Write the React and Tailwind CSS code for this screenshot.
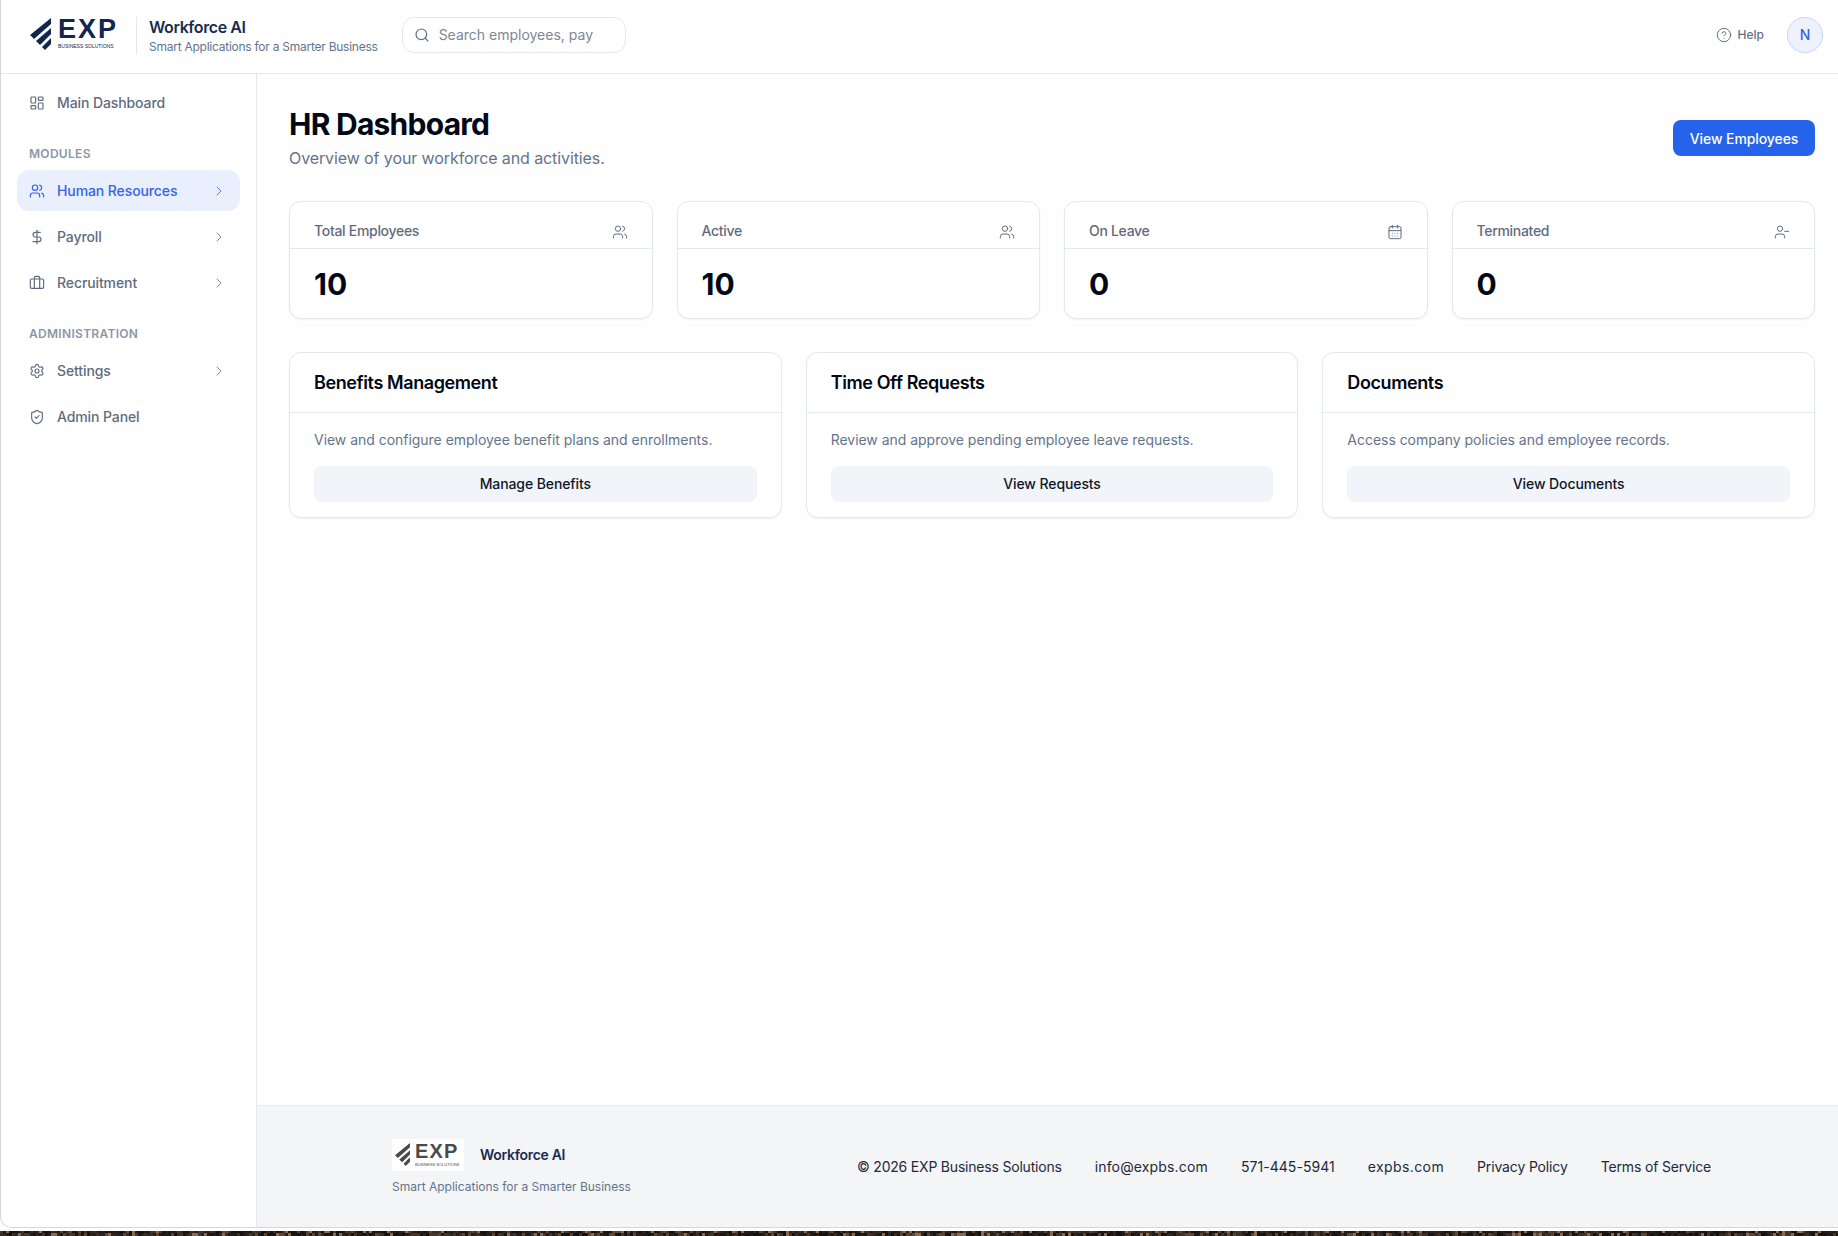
import React from "react";
import {
  LayoutDashboard,
  Users,
  DollarSign,
  Briefcase,
  Settings,
  ShieldCheck,
  ChevronRight,
  Search,
  CircleHelp,
  CalendarDays,
  UserMinus,
} from "lucide-react";

const stats = [
  { label: "Total Employees", value: "10", icon: Users },
  { label: "Active", value: "10", icon: Users },
  { label: "On Leave", value: "0", icon: CalendarDays },
  { label: "Terminated", value: "0", icon: UserMinus },
];

const panels = [
  { title: "Benefits Management", text: "View and configure employee benefit plans and enrollments.", action: "Manage Benefits" },
  { title: "Time Off Requests", text: "Review and approve pending employee leave requests.", action: "View Requests" },
  { title: "Documents", text: "Access company policies and employee records.", action: "View Documents" },
];

const footerLinks = [
  { text: "© 2026 EXP Business Solutions", className: "tracking-[-0.2px]" },
  { text: "info@expbs.com", className: "tracking-[0.15px]" },
  { text: "571-445-5941", className: "tracking-[0.05px]" },
  { text: "expbs.com", className: "tracking-[0.4px]" },
  { text: "Privacy Policy", className: "tracking-[-0.15px]" },
  { text: "Terms of Service", className: "tracking-[-0.15px]" },
];

// desktop wallpaper peeking out under the window
const wallpaper = ["#1f1b18", "#2c2520", "#14110f", "#3a2e25", "#1a1613", "#5b4636", "#241d19", "#8a6a50", "#171310", "#463629"];
const speckle = (n) => Math.floor(Math.abs(Math.sin(n * 12.9898) * 43758.5453)) % wallpaper.length;

// three slanted bars of the EXP mark
const LogoMark = ({ className }) => (
  <svg viewBox="0 0 21 32" className={className} fill="currentColor">
    <polygon points="21,0 21,6 4,21 0,17" />
    <polygon points="21,10 21,16 10,27 6,23" />
    <polygon points="21,20 21,26 15,32 12,29" />
  </svg>
);

const NavItem = ({ icon: Icon, label, active, chevron }) => (
  <div
    className={`flex h-[41px] items-center justify-between rounded-xl px-3 ${
      active ? "bg-[#e9effd] text-[#3563e9]" : "text-[#5f6b80]"
    }`}
  >
    <div className="flex items-center gap-3">
      <Icon size={16} strokeWidth={1.75} />
      <span className="text-sm font-medium tracking-[-0.1px]">{label}</span>
    </div>
    {chevron && <ChevronRight size={16} strokeWidth={1.5} className="mr-[1px] opacity-80" />}
  </div>
);

const Header = () => (
  <header className="flex h-[74px] shrink-0 items-center justify-between border-b border-[#e5e8ec] bg-white pb-[3px] pl-[29px] pr-[15px]">
    <div className="flex items-center">
      <div className="mb-[3px] flex w-[88px] items-center gap-[7px] text-[#12264f]">
        <LogoMark className="h-8 w-[21px] shrink-0" />
        <div className="flex flex-col">
          <span className="font-['Liberation_Sans',sans-serif] text-[27px] font-bold leading-[22px] tracking-[2px]">EXP</span>
          <span className="mt-[3px] whitespace-nowrap font-['Liberation_Sans',sans-serif] text-[5px] leading-[7px]">BUSINESS SOLUTIONS</span>
        </div>
      </div>
      <div className="ml-[18px] h-[37px] w-px bg-[#e5e8ec]" />
      <div className="ml-[12px] flex flex-col pt-[1px]">
        <span className="text-base font-semibold leading-[22px] tracking-[-0.4px] text-[#1a2b50]">Workforce AI</span>
        <span className="text-xs leading-[17px] tracking-[-0.25px] text-[#64748b]">Smart Applications for a Smarter Business</span>
      </div>
      <div className="mb-[1px] ml-6 flex h-9 w-[224px] items-center gap-[9px] rounded-xl border border-[#e5e8ec] bg-white px-[11px]">
        <Search size={16} strokeWidth={1.75} className="text-[#5f6b80]" />
        <span className="text-sm text-[#7c8798]">Search employees, pay</span>
      </div>
    </div>
    <div className="flex items-center gap-[23px]">
      <div className="flex items-center gap-[6px] text-[#646f82]">
        <CircleHelp size={16} strokeWidth={1.5} />
        <span className="text-xs font-medium">Help</span>
      </div>
      <div className="flex h-9 w-9 items-center justify-center rounded-full border border-[#c7d2fe] bg-[#eef2ff] text-sm font-medium text-[#3563e9]">
        N
      </div>
    </div>
  </header>
);

const Sidebar = () => (
  <aside className="flex w-[256px] shrink-0 flex-col border-r border-[#e5e8ec] bg-white pl-[16px] pr-[16px] pt-[8px]">
    <NavItem icon={LayoutDashboard} label="Main Dashboard" />
    <div className="mb-[8px] mt-[23px] px-3 text-xs font-semibold tracking-[0.3px] text-[#8c96a8]">MODULES</div>
    <div className="flex flex-col gap-[5px]">
      <NavItem icon={Users} label="Human Resources" active chevron />
      <NavItem icon={DollarSign} label="Payroll" chevron />
      <NavItem icon={Briefcase} label="Recruitment" chevron />
    </div>
    <div className="mb-[8px] mt-[23px] px-3 text-xs font-semibold tracking-[0.3px] text-[#8c96a8]">ADMINISTRATION</div>
    <div className="flex flex-col gap-[5px]">
      <NavItem icon={Settings} label="Settings" chevron />
      <NavItem icon={ShieldCheck} label="Admin Panel" />
    </div>
  </aside>
);

const StatCard = ({ label, value, icon: Icon }) => (
  <div className="rounded-xl border border-[#e5e8ec] bg-white shadow-[0_1px_2px_rgba(0,0,0,0.05)]">
    <div className="flex h-[47px] items-center justify-between border-b border-[#e5e8ec] px-6 pt-[11px]">
      <span className="text-sm font-medium tracking-[-0.3px] text-[#5f6b80]">{label}</span>
      <Icon size={16} strokeWidth={1.5} className="mt-[3px] text-[#5f6b80]" />
    </div>
    <div className="flex h-[69px] items-center px-6 pt-[2px] text-[30px] font-bold text-[#020817]">{value}</div>
  </div>
);

const Panel = ({ title, text, action }) => (
  <div className="rounded-xl border border-[#e5e8ec] bg-white shadow-[0_1px_2px_rgba(0,0,0,0.05)]">
    <div className="flex h-[60px] items-center border-b border-[#e5e8ec] px-6 text-lg font-semibold tracking-[-0.4px] text-[#020817]">
      {title}
    </div>
    <div className="px-6 pb-[15px] pt-[17px]">
      <p className="text-sm leading-5 tracking-[-0.03px] text-[#64748b]">{text}</p>
      <button className="mt-[16px] flex h-9 w-full items-center justify-center rounded-lg bg-[#f1f5f9] text-sm font-medium tracking-[-0.1px] text-[#0f172a]">
        {action}
      </button>
    </div>
  </div>
);

const Footer = () => (
  <footer className="flex h-[122px] shrink-0 items-center justify-between border-t border-[#e5e8ec] bg-[#f3f5f7] pl-[135px] pr-[127px]">
    <div className="flex flex-col">
      <div className="flex items-center gap-4">
        <div className="flex h-8 w-[72px] items-center gap-[5px] bg-white pl-[3px] text-[#4a4a4a]">
          <LogoMark className="h-[25px] w-[15px] shrink-0" />
          <div className="flex flex-col">
            <span className="font-['Liberation_Sans',sans-serif] text-[20px] font-bold leading-[17px] tracking-[1.2px]">EXP</span>
            <span className="mt-[2px] whitespace-nowrap font-['Liberation_Sans',sans-serif] text-[4px] leading-[5px]">BUSINESS SOLUTIONS</span>
          </div>
        </div>
        <span className="text-sm font-semibold tracking-[-0.3px] text-[#1a2b50]">Workforce AI</span>
      </div>
      <span className="mt-2 text-xs text-[#64748b]">Smart Applications for a Smarter Business</span>
    </div>
    <div className="mt-[1px] flex items-center gap-[33px]">
      {footerLinks.map((link) => (
        <span key={link.text} className={`text-sm text-[#1e293b] ${link.className}`}>
          {link.text}
        </span>
      ))}
    </div>
  </footer>
);

export default function App() {
  return (
    <div className="flex h-[1236px] flex-col overflow-hidden bg-white font-['Inter',sans-serif]">
      <div className="min-h-0 flex-1 pb-[3px]">
        <div className="flex h-full flex-col overflow-hidden rounded-bl-xl border-b border-l border-[#d4d6da]">
          <Header />
          <div className="flex min-h-0 flex-1">
            <Sidebar />
            <div className="flex min-w-0 flex-1 flex-col bg-[#fefefe]">
              <main className="flex-1 pl-[32px] pr-[23px] pt-[26px]">
                <div className="flex items-start justify-between">
                  <div>
                    <h1 className="text-[30px] font-bold leading-[48px] tracking-[-0.75px] text-[#020817]">HR Dashboard</h1>
                    <p className="text-base leading-[20px] tracking-[-0.1px] text-[#64748b]">Overview of your workforce and activities.</p>
                  </div>
                  <button className="mt-[20px] h-9 w-[142px] rounded-lg bg-[#2563eb] pt-[1px] text-sm font-medium tracking-[-0.1px] text-white">
                    View Employees
                  </button>
                </div>
                <div className="mt-[33px] grid grid-cols-4 gap-6">
                  {stats.map((stat) => (
                    <StatCard key={stat.label} {...stat} />
                  ))}
                </div>
                <div className="mt-[33px] grid grid-cols-3 gap-6">
                  {panels.map((panel) => (
                    <Panel key={panel.title} {...panel} />
                  ))}
                </div>
              </main>
              <Footer />
            </div>
          </div>
        </div>
      </div>
      <svg width="1838" height="5" className="shrink-0">
        {Array.from({ length: 1226 }, (_, i) => (
          <rect key={i} x={(i % 613) * 3} y={i < 613 ? 0 : 2} width={3} height={i < 613 ? 2 : 3} fill={wallpaper[speckle(i + 1)]} />
        ))}
      </svg>
    </div>
  );
}
